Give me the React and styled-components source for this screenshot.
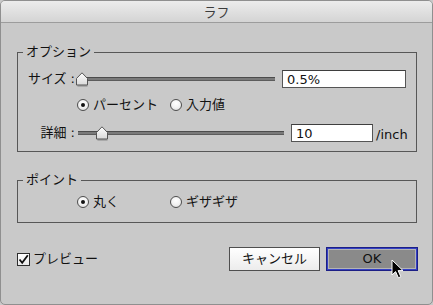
import React from "react";
import styled, { createGlobalStyle } from "styled-components";

const Global = createGlobalStyle`
  html, body { margin: 0; padding: 0; background: #c9c9c9; }
  body { font-family: "DejaVu Sans", "Noto Sans CJK JP", sans-serif; }
  * { box-sizing: border-box; }
`;

const Window = styled.div`
  position: relative;
  width: 433px;
  height: 305px;
  border: 1px solid #8f8f8f;
  border-radius: 5px;
  background: #c9c9c9;
  overflow: hidden;
  color: #111;
  font-size: 13px;
`;

const TitleBar = styled.div`
  height: 22px;
  line-height: 21px;
  text-align: center;
  font-size: 13px;
  color: #3c3c3c;
  background: linear-gradient(#ececec, #d4d4d4);
  border-bottom: 1px solid #9c9c9c;
  font-family: "Noto Sans CJK JP", sans-serif;
`;

const Body = styled.div`
  padding: 0 15px 0 16px;
`;

const Group = styled.fieldset`
  margin: ${(p) => p.$top}px 0 0 0;
  padding: ${(p) => p.$pad};
  border: 1px solid #575757;
  min-inline-size: 0;
`;

const Legend = styled.legend`
  margin-left: 5px;
  padding: 0 3px;
  font-size: 13px;
  line-height: 16px;
  height: 16px;
`;

const Row = styled.div`
  display: flex;
  align-items: center;
  height: ${(p) => p.$h || 18}px;
  margin-top: ${(p) => p.$mt || 0}px;
`;

const Label = styled.div`
  width: 57px;
  text-align: right;
  line-height: 16px;
  white-space: pre;
`;

const SliderBox = styled.div`
  position: relative;
  width: ${(p) => p.$w}px;
  margin-left: 3px;
  height: 18px;
  display: flex;
  align-items: center;
`;

const Track = styled.div`
  width: 100%;
  height: 4px;
  background: #7a7a7a;
  border-top: 1px solid #4c4c4c;
  border-bottom: 1px solid #5c5c5c;
`;

const ThumbSvg = styled.svg`
  position: absolute;
  left: ${(p) => p.$at}px;
  top: 2px;
`;

const TextField = styled.input`
  width: ${(p) => p.$w}px;
  height: 18px;
  margin-left: 7px;
  padding: 0 4px;
  border: 1px solid #555;
  border-top-color: #3e3e3e;
  background: #fff;
  font-family: "DejaVu Sans", sans-serif;
  font-size: 13px;
  color: #111;
  outline: none;
`;

const Unit = styled.span`
  margin-left: 3px;
  font-size: 13px;
  line-height: 16px;
  padding-top: 3px;
`;

const RadioRow = styled.div`
  display: grid;
  grid-template-columns: 93px 93px;
  margin-left: 59px;
  height: 16px;
  margin-top: ${(p) => p.$mt || 0}px;
`;

const Choice = styled.label`
  display: flex;
  align-items: center;
  gap: 4px;
  line-height: 16px;
  white-space: nowrap;
`;

const RadioDot = styled.span`
  width: 12px;
  height: 12px;
  border-radius: 50%;
  border: 1px solid #4e4e4e;
  background: radial-gradient(circle at 50% 35%, #ffffff 0%, #f2f2f2 50%, #d6d6d6 100%);
  display: flex;
  align-items: center;
  justify-content: center;
  flex: none;
  &::after {
    content: "";
    width: 4px;
    height: 4px;
    border-radius: 50%;
    background: ${(p) => (p.$on ? "#111" : "transparent")};
  }
`;

const Footer = styled.div`
  display: flex;
  align-items: center;
  justify-content: space-between;
  margin: 24px -1px 0 0;
`;

const Check = styled.label`
  display: flex;
  align-items: center;
  gap: 3px;
  line-height: 16px;
`;

const Box = styled.span`
  width: 13px;
  height: 13px;
  border: 1px solid #2e2e2e;
  background: linear-gradient(#ffffff, #e9e9e9);
  display: flex;
  align-items: center;
  justify-content: center;
`;

const Buttons = styled.div`
  display: flex;
  gap: 6px;
`;

const Button = styled.button`
  width: ${(p) => p.$w}px;
  height: 24px;
  padding: 0;
  font-family: "DejaVu Sans", "Noto Sans CJK JP", sans-serif;
  font-size: 13px;
  color: #111;
  border: 1px solid ${(p) => (p.$default ? "#1c1f86" : "#4f4f4f")};
  background: ${(p) => (p.$default ? "#8a8a8a" : "linear-gradient(#ffffff, #ececec)")};
  box-shadow: ${(p) =>
    p.$default ? "inset 0 0 0 1px #3440c4, inset 0 0 0 2px #b4b4b4" : "none"};
  line-height: 20px;
`;

const Cursor = styled.svg`
  position: absolute;
  left: 390px;
  top: 258px;
`;

function Thumb({ at }) {
  return (
    <ThumbSvg $at={at} width="12" height="15" viewBox="0 0 12 15">
      <defs>
        <linearGradient id="tg" x1="0" y1="0" x2="0" y2="1">
          <stop offset="0" stopColor="#ffffff" />
          <stop offset="1" stopColor="#d9d9d9" />
        </linearGradient>
      </defs>
      <polygon points="1,14 11,14 11,7 6,1.5 1,7" fill="#8a8a8a" opacity="0.5" transform="translate(0.5,1)" />
      <polygon points="0.5,13 11.5,13 11.5,6.5 6,0.8 0.5,6.5" fill="url(#tg)" stroke="#555" strokeWidth="1" />
    </ThumbSvg>
  );
}

function Slider({ w, at }) {
  return (
    <SliderBox $w={w}>
      <Track />
      <Thumb at={at} />
    </SliderBox>
  );
}

function Radio({ on, children }) {
  return (
    <Choice>
      <RadioDot $on={on} />
      <span>{children}</span>
    </Choice>
  );
}

export default function App() {
  return (
    <>
      <Global />
      <Window>
        <TitleBar>ラフ</TitleBar>
        <Body>
          <Group $top={21} $pad="0 0 9px 0">
            <Legend>オプション</Legend>
            <Row $mt={10}>
              <Label>{"サイズ :"}</Label>
              <Slider w={197} at={-2} />
              <TextField $w={124} readOnly value="0.5%" />
            </Row>
            <RadioRow $mt={9}>
              <Radio on>パーセント</Radio>
              <Radio>入力値</Radio>
            </RadioRow>
            <Row $mt={11}>
              <Label>{"詳細 :"}</Label>
              <Slider w={206} at={18} />
              <TextField $w={82} readOnly value="10" />
              <Unit>/inch</Unit>
            </Row>
          </Group>
          <Group $top={20} $pad="6px 0 12px 0">
            <Legend>ポイント</Legend>
            <RadioRow>
              <Radio on>丸く</Radio>
              <Radio>ギザギザ</Radio>
            </RadioRow>
          </Group>
          <Footer>
            <Check>
              <Box>
                <svg width="11" height="11" viewBox="0 0 11 11">
                  <path d="M1.5 5.5 L4.2 8.8 L9.8 1.2" fill="none" stroke="#111" strokeWidth="1.8" />
                </svg>
              </Box>
              <span>プレビュー</span>
            </Check>
            <Buttons>
              <Button $w={91}>キャンセル</Button>
              <Button $w={92} $default>OK</Button>
            </Buttons>
          </Footer>
        </Body>
        <Cursor width="13" height="20" viewBox="0 0 13 20">
          <polygon
            points="1,1 1,16 4.6,12.6 7.4,18.8 9.8,17.7 7.1,11.6 12,11.6"
            fill="#000"
            stroke="#fff"
            strokeWidth="1"
            strokeLinejoin="round"
          />
        </Cursor>
      </Window>
    </>
  );
}
